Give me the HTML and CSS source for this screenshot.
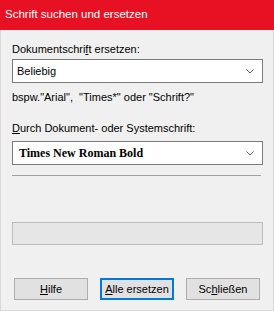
FILE: index.html
```html
<!DOCTYPE html>
<html lang="de">
<head>
    <meta charset="UTF-8">
    <meta name="viewport" content="width=device-width, initial-scale=1.0">
    <title>Schrift suchen und ersetzen</title>
    <link rel="stylesheet" href="styles.css">
</head>
<body>

<div class="dialog">
    <div class="titlebar">Schrift suchen und ersetzen</div>

    <div class="dialog-body">
        <!-- Schrift im Dokument -->
        <label class="field-label">Dokumentschri<u>f</u>t ersetzen:</label>
        <div class="combo">
            <span class="combo-text">Beliebig</span>
            <svg class="chevron" width="8" height="5" viewBox="0 0 8 5">
                <path d="M0.5 0.5 L4 4 L7.5 0.5" fill="none" stroke="#606060" stroke-width="1"/>
            </svg>
        </div>
        <p class="hint">bspw."Arial", &nbsp;"Times*" oder "Schrift?"</p>

        <!-- Ersatzschrift -->
        <label class="field-label second"><u>D</u>urch Dokument- oder Systemschrift:</label>
        <div class="combo">
            <span class="combo-text serif">Times New Roman Bold</span>
            <svg class="chevron" width="8" height="5" viewBox="0 0 8 5">
                <path d="M0.5 0.5 L4 4 L7.5 0.5" fill="none" stroke="#606060" stroke-width="1"/>
            </svg>
        </div>

        <div class="separator"></div>

        <div class="progress"></div>

        <div class="buttons">
            <button class="btn"><u>H</u>ilfe</button>
            <button class="btn default"><u>A</u>lle ersetzen</button>
            <button class="btn">Sc<u>h</u>ließen</button>
        </div>
    </div>
</div>

</body>
</html>
```

FILE: styles.css
```css
body {
    margin: 0;
    padding: 0;
    font-family: "Liberation Sans", Arial, sans-serif;
    font-size: 11px;
    color: #000;
    background-color: #f0f0f0;
}

.dialog {
    width: 274px;
    height: 311px;
    box-sizing: border-box;
    background-color: #f0f0f0;
}

.titlebar {
    height: 30px;
    box-sizing: border-box;
    padding: 4px 0 0 5px;
    line-height: 20px;
    background-color: #e81123;
    color: white;
    font-size: 11.5px;
}

.dialog-body {
    height: 281px;
    box-sizing: border-box;
    border: 1px solid #d9d9d9;
    border-top: none;
    padding: 11px 10px 0 11px;
}

.field-label {
    display: block;
    line-height: 16px;
    margin-bottom: 2px;
    color: #000;
}

.field-label.second {
    margin-bottom: 5px;
}

.combo {
    height: 24px;
    box-sizing: border-box;
    border: 1px solid #7a7a7a;
    background-color: white;
    display: flex;
    align-items: center;
    justify-content: space-between;
    padding: 0 8px 0 4px;
}

.combo-text {
    line-height: 16px;
}

.combo-text.serif {
    font-family: "Liberation Serif", serif;
    font-weight: bold;
    font-size: 12px;
    padding-left: 2px;
}

.chevron {
    display: block;
}

.hint {
    margin: 6px 0 15px 0;
    line-height: 16px;
}

.separator {
    margin-top: 10px;
    height: 1px;
    width: 249px;
    background-color: #a0a0a0;
}

.progress {
    margin-top: 46px;
    height: 23px;
    box-sizing: border-box;
    border: 1px solid #bcbcbc;
    background-color: #e6e6e6;
}

.buttons {
    display: flex;
    gap: 12px;
    margin-top: 33px;
    padding-left: 2px;
}

.btn {
    width: 74px;
    height: 22px;
    box-sizing: border-box;
    border: 1px solid #adadad;
    background-color: #e1e1e1;
    font-family: "Liberation Sans", Arial, sans-serif;
    font-size: 11px;
    color: #000;
    padding: 0;
    white-space: nowrap;
}

.btn.default {
    border: 2px solid #0078d7;
}
```
